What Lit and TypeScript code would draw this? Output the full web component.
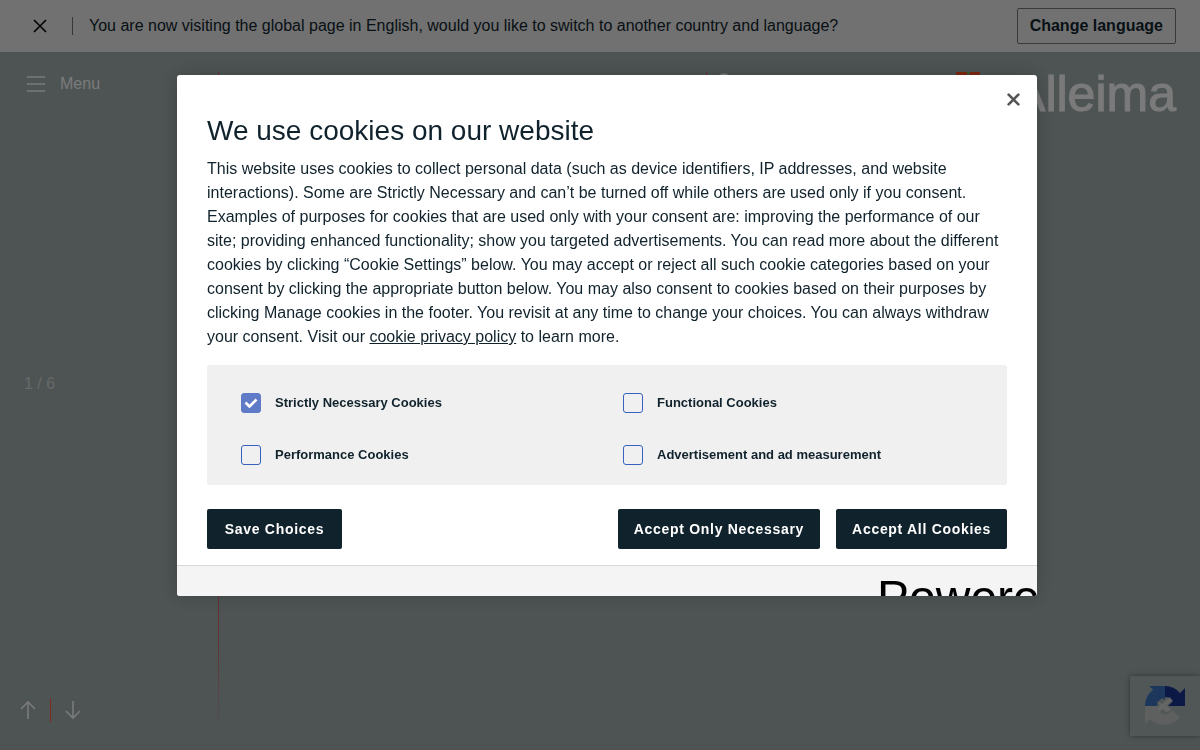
import { LitElement, html, css, svg } from "lit";
import { customElement, state } from "lit/decorators.js";

const arrow = (down: boolean) => svg`<svg width="16" height="20" viewBox="0 0 16 20" fill="none" stroke="currentColor" stroke-width="1.600">${
  down ? svg`<path d="M8 1v17M1 11l7 7 7-7"/>` : svg`<path d="M8 19V2M1 9l7-7 7 7"/>`
}</svg>`;

@customElement("cookie-dialog")
class CookieDialog extends LitElement {
  @state() private groups = [
    { id: "necessary", name: "Strictly Necessary Cookies", on: true },
    { id: "functional", name: "Functional Cookies", on: false },
    { id: "performance", name: "Performance Cookies", on: false },
    { id: "ads", name: "Advertisement and ad measurement", on: false },
  ];

  static styles = css`
    :host {
      display: block;
      color: #10222c;
      font: 16px/24px "Liberation Sans", Arial, sans-serif;
    }
    * { box-sizing: border-box; }
    .dialog {
      position: relative;
      background: #fff;
      border-radius: 3px;
      overflow: hidden;
      box-shadow: 0 0 18px rgba(0, 0, 0, 0.2);
    }
    .close {
      position: absolute;
      top: 12px;
      right: 12px;
      width: 24px;
      height: 24px;
      padding: 0;
      border: 0;
      background: none;
      color: #565656;
      display: grid;
      place-items: center;
    }
    .body { padding: 38px 30px 16px; }
    .title { margin: 0 0 8px; font-size: 28px; line-height: 36px; font-weight: 400; }
    .text { margin: 0; }
    .link { color: inherit; }
    .groups {
      margin: 16px 0 24px;
      padding: 22px 34px 14px;
      background: #f0f0f0;
      border-radius: 3px;
      display: grid;
      grid-template-columns: 1fr 1fr;
      column-gap: 32px;
      row-gap: 20px;
    }
    .group {
      display: flex;
      align-items: center;
      gap: 14px;
      height: 32px;
      font-size: 13px;
      line-height: 20px;
      font-weight: 700;
    }
    .box { position: relative; display: flex; }
    .tick {
      appearance: none;
      margin: 0;
      width: 20px;
      height: 20px;
      border: 1px solid #3860be;
      border-radius: 3px;
    }
    .tick:checked { background: #5f7bc8; border-color: #5f7bc8; }
    .mark { position: absolute; inset: 0; pointer-events: none; display: none; }
    .tick:checked + .mark { display: block; }
    .actions { display: flex; gap: 16px; flex-wrap: wrap; }
    .action {
      height: 40px;
      padding: 0 16px;
      border: 0;
      border-radius: 2px;
      background: #10222c;
      color: #fff;
      font: 700 14px/20px "Liberation Sans", Arial, sans-serif;
      letter-spacing: 0.05em;
    }
    .save { min-width: 135px; margin-right: auto; }
    .foot {
      height: 31px;
      border-top: 1px solid #d8d8d8;
      background: #f4f4f4;
      overflow: hidden;
      display: flex;
      justify-content: flex-end;
    }
    .powered {
      width: 160px;
      padding-top: 4px;
      color: #000;
      font-size: 48px;
      line-height: 56px;
      white-space: nowrap;
    }
  `;

  private toggle(id: string, on: boolean) {
    this.groups = this.groups.map((g) => (g.id === id ? { ...g, on } : g));
  }

  render() {
    return html`<section class="dialog" role="dialog" aria-labelledby="title">
      <button class="close" aria-label="Close">
        <svg width="13" height="13" viewBox="0 0 12 12" stroke="currentColor" stroke-width="2.400" stroke-linecap="round"><path d="M1.500 1.500l9 9M10.500 1.500l-9 9" /></svg>
      </button>
      <div class="body">
        <h2 class="title" id="title">We use cookies on our website</h2>
        <p class="text">
          This website uses cookies to collect personal data (such as device identifiers, IP addresses, and website
          interactions). Some are Strictly Necessary and can’t be turned off while others are used only if you consent.
          Examples of purposes for cookies that are used only with your consent are: improving the performance of our
          site; providing enhanced functionality; show you targeted advertisements. You can read more about the
          different cookies by clicking “Cookie Settings” below. You may accept or reject all such cookie categories
          based on your consent by clicking the appropriate button below. You may also consent to cookies based on their
          purposes by clicking Manage cookies in the footer. You revisit at any time to change your choices. You can
          always withdraw your consent. Visit our <a class="link" href="#privacy">cookie privacy policy</a> to learn
          more.
        </p>
        <div class="groups">
          ${this.groups.map(
            (g) => html`<div class="group">
              <span class="box">
                <input class="tick" type="checkbox" id=${g.id} .checked=${g.on}
                  @change=${(e: Event) => this.toggle(g.id, (e.target as HTMLInputElement).checked)} />
                <svg class="mark" width="20" height="20" viewBox="0 0 20 20" fill="none" stroke="#fff" stroke-width="2.600" stroke-linejoin="round"><path d="M4.500 9.500l4 4 7-7" /></svg>
              </span>
              <label for=${g.id}>${g.name}</label>
            </div>`
          )}
        </div>
        <div class="actions">
          <button class="action save">Save Choices</button>
          <button class="action">Accept Only Necessary</button>
          <button class="action">Accept All Cookies</button>
        </div>
      </div>
      <div class="foot"><span class="powered">Powered</span></div>
    </section>`;
  }
}

@customElement("app-root")
class AppRoot extends LitElement {
  static styles = css`
    :host {
      display: block;
      font: 16px/24px "Liberation Sans", Arial, sans-serif;
    }
    * { box-sizing: border-box; }
    .page {
      position: relative;
      min-height: 100vh;
      display: flex;
      flex-direction: column;
      background: #9ca8a8;
      color: #f4f4f4;
      overflow: hidden;
    }
    .plain { padding: 0; border: 0; background: none; color: inherit; font: inherit; display: flex; align-items: center; }
    .notice {
      display: flex;
      align-items: center;
      min-height: 52px;
      padding: 0 24px 0 32px;
      background: #e2e2e2;
      color: #10222c;
    }
    .notice-text { flex: 1; margin: 0 16px; }
    .rule { width: 1px; height: 18px; margin-left: 24px; background: #6a7072; }
    .change {
      height: 36px;
      padding: 0 12px;
      border: 1px solid #6c7478;
      border-radius: 2px;
      background: none;
      color: inherit;
      font: inherit;
      font-weight: 700;
    }
    .head { display: flex; align-items: flex-start; padding: 16px 24px 0; }
    .menu { height: 32px; gap: 14px; padding-left: 2px; }
    .search { height: 28px; gap: 8px; margin-left: auto; margin-right: 165px; }
    .brand { display: flex; align-items: flex-start; gap: 32px; }
    .mark { margin-top: 4px; }
    .logo { margin: 0; font-size: 50px; line-height: 52px; -webkit-text-stroke: 1px #f4f4f4; }
    .count { flex: 1; display: flex; align-items: center; padding: 0 24px 50px; color: #ccd2d2; }
    .pager { display: flex; align-items: center; gap: 14px; padding: 0 20px 28px; height: 53px; }
    .bar { width: 1px; height: 24px; background: #ff5840; }
    .line {
      position: absolute;
      left: 218px;
      top: 72px;
      bottom: 12px;
      width: 1px;
      background: linear-gradient(#d86060, #c86468 85%, #9ca8a8);
    }
    .line.short { left: 706px; bottom: 50%; }
    .badge {
      position: absolute;
      right: 0;
      bottom: 14px;
      width: 70px;
      height: 60px;
      padding: 8px 14px;
      background: #a2aeae;
      box-shadow: 0 0 5px #606060;
    }
    .shade { position: fixed; inset: 0; background: rgba(0, 0, 0, 0.5); }
    .dialog {
      position: fixed;
      top: 10%;
      left: 177px;
      right: 163px;
    }
  `;

  render() {
    return html`<main class="page">
        <div class="notice">
          <button class="plain" aria-label="Dismiss">
            <svg width="16" height="16" viewBox="0 0 16 16" stroke="#000" stroke-width="1.600"><path d="M2 2l12 12M14 2L2 14" /></svg>
          </button>
          <span class="rule"></span>
          <span class="notice-text">You are now visiting the global page in English, would you like to switch to another country and language?</span>
          <button class="change">Change language</button>
        </div>
        <header class="head">
          <button class="plain menu">
            <svg width="20" height="16" viewBox="0 0 20 16" stroke="currentColor" stroke-width="1.600"><path d="M1 1h18M1 8h18M1 15h18" /></svg>
            Menu
          </button>
          <button class="plain search">
            <svg width="16" height="20" viewBox="0 0 16 20" fill="none" stroke="currentColor" stroke-width="1.600"><circle cx="8" cy="8" r="6" /><path d="M12 13l4 5" /></svg>
            Search
          </button>
          <div class="brand">
            <svg class="mark" width="24" height="24" viewBox="0 0 24 24"><path d="M0 0h11v11H0zM14 0h10v11H14z" fill="#ff5020" /><path d="M11 0h3v11h-3z" fill="#90a860" /></svg>
            <p class="logo">Alleima</p>
          </div>
        </header>
        <div class="count">1 / 6</div>
        <div class="pager">
          <button class="plain" aria-label="Previous">${arrow(false)}</button>
          <span class="bar"></span>
          <button class="plain" aria-label="Next">${arrow(true)}</button>
        </div>
        <span class="line"></span>
        <span class="line short"></span>
        <div class="badge">
          <svg width="42" height="44" viewBox="0 0 42 44">
            <path d="M21 2A20 20 0 0 0 1 22h12a8 8 0 0 1 8-8z" fill="#386cb8" />
            <path d="M5 2h16v14z" fill="#386cb8" />
            <path d="M21 2a20 20 0 0 1 15 7l5-5v18H24l5-5a9 9 0 0 0-8-4z" fill="#18308c" />
            <path d="M1 22h12a8 8 0 0 0 15 4l8 7A20 20 0 0 1 6 35l-5 5z" fill="#bcc0c0" />
            <path d="M12 17l6 3 8-7 2 4-5 4 4 5-5 2-3-3-4 3-2-4 3-3z" fill="#c8cccc" />
          </svg>
        </div>
      </main>
      <div class="shade"></div>
      <cookie-dialog class="dialog"></cookie-dialog>`;
  }
}
